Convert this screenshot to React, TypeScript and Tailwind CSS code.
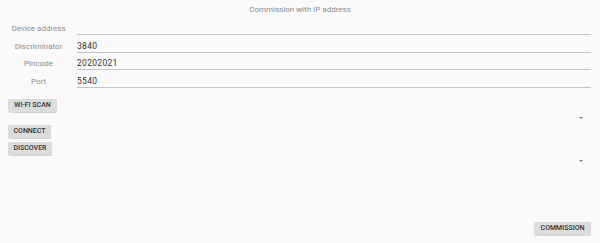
const fields = [
  { label: "Device address", value: "" },
  { label: "Discriminator", value: "3840" },
  { label: "Pincode", value: "20202021" },
  { label: "Port", value: "5540" },
];

function Btn({ text, w }: { text: string; w: string }) {
  return (
    <div
      className={`${w} h-[13px] flex items-center justify-center bg-[#dcdcdc] text-[7px] font-medium text-[#333] leading-none shadow-[0_0.5px_1px_rgba(0,0,0,0.15)]`}
    >
      {text}
    </div>
  );
}

function Spinner() {
  return (
    <div className="h-[13px] flex items-center justify-end pr-[17px]">
      <div className="w-0 h-0 border-l-[2.5px] border-r-[2.5px] border-t-[2.5px] border-l-transparent border-r-transparent border-t-[#777]" />
    </div>
  );
}

export default function App() {
  return (
    <div
      className="w-[600px] h-[243px] bg-[#fafafa] flex flex-col"
      style={{ fontFamily: "Roboto, 'Noto Sans', sans-serif" }}
    >
      <div className="h-[17.33px] pt-[5px] text-center text-[8px] leading-[10px] text-[#8a8a8a]">
        Commission with IP address
      </div>

      {fields.map((f) => (
        <div key={f.label} className="h-[17.67px] flex items-end pr-[9px]">
          <div className="w-[77px] text-center text-[8px] leading-[10px] pb-[1px] text-[#8c8c8c]">
            {f.label}
          </div>
          <div className="flex-1 border-b border-[#c4c4c4] text-[8.5px] leading-[10px] pb-[1px] text-[#333] tracking-[0.3px]">
            {f.value || "\u00a0"}
          </div>
        </div>
      ))}

      <div className="mt-[11px] pl-[8px]">
        <Btn text="WI-FI SCAN" w="w-[49px]" />
      </div>
      <Spinner />
      <div className="pl-[8px] flex flex-col gap-[4px]">
        <Btn text="CONNECT" w="w-[43px]" />
        <Btn text="DISCOVER" w="w-[44px]" />
      </div>
      <Spinner />

      <div className="flex-1" />
      <div className="flex justify-end pr-[9px] pb-[8px]">
        <Btn text="COMMISSION" w="w-[57px]" />
      </div>
    </div>
  );
}
